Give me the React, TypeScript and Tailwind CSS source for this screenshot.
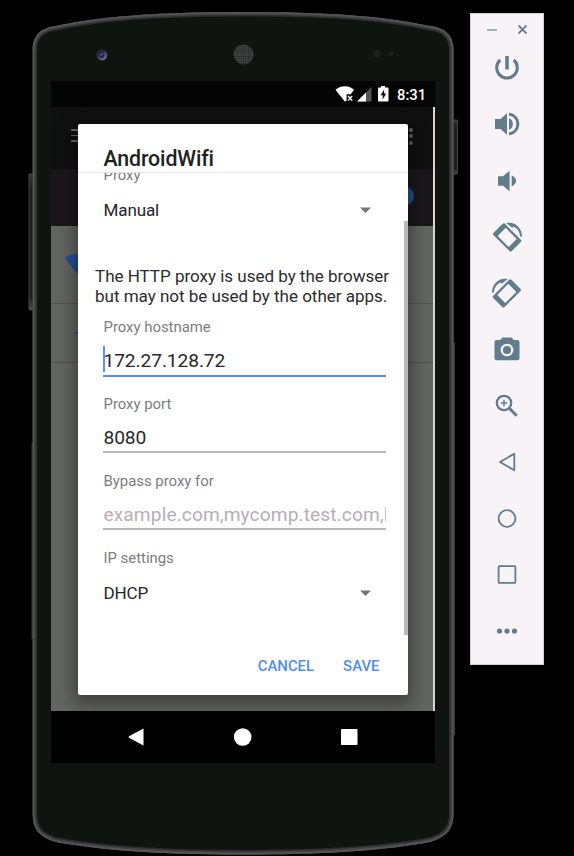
import React from 'react';

function PhoneShell() {
  const outline =
    'M32.7 50 C32.7 38 38 28 56 26 C100 17 150 12 243 12 C336 12 386 17 430 26 C448 28 453.500 38 453.500 50 V813 C453.500 829 447 837 430 842 C386 850 330 854.500 243 854.500 C156 854.500 100 850 56 842 C39 837 32.700 829 32.700 813 Z';
  return (
    <svg className="absolute left-0 top-0" width="470" height="856" viewBox="0 0 470 856">
      <defs>
        <linearGradient id="key" x1="0" x2="0" y1="0" y2="1">
          <stop offset="0" stopColor="#3a3a3c" />
          <stop offset="0.1" stopColor="#1f1f20" />
          <stop offset="0.9" stopColor="#1f1f20" />
          <stop offset="1" stopColor="#4a4a4c" />
        </linearGradient>
        <pattern id="mesh" width="2.4" height="2.4" patternUnits="userSpaceOnUse">
          <rect width="2.4" height="2.4" fill="#484848" />
          <circle cx="1.2" cy="1.2" r="0.85" fill="#1a1a1a" />
        </pattern>
        <clipPath id="body">
          <path d={outline} />
        </clipPath>
      </defs>
      <rect x="29" y="174" width="6" height="136" rx="1" fill="url(#key)" stroke="#515153" strokeWidth="0.8" />
      <rect x="31.5" y="443" width="3" height="196" fill="#3c3c3e" />
      <rect x="451" y="120" width="6.5" height="54" rx="1" fill="url(#key)" stroke="#515153" strokeWidth="0.8" />
      <rect x="452" y="343" width="2.8" height="392" fill="#4c4c4e" />
      <g clipPath="url(#body)">
        <path d={outline} fill="#101411" stroke="#2c2d2e" strokeWidth="9" />
        <path d={outline} fill="none" stroke="#434345" strokeWidth="6" />
        <path d={outline} fill="none" stroke="#555557" strokeWidth="3" />
      </g>
      <circle cx="102" cy="55" r="5.8" fill="#292a2b" />
      <circle cx="102.4" cy="56" r="4.3" fill="#6b6b70" />
      <circle cx="101.500" cy="54.800" r="3.400" fill="#23245e" />
      <path d="M100 55.500l3-2" stroke="#4d55d0" strokeWidth="1.500" />
      <circle cx="243.500" cy="54.500" r="10" fill="url(#mesh)" />
      <circle cx="377" cy="53.500" r="4" fill="#1f1c1c" />
      <circle cx="391" cy="53.500" r="2.500" fill="#1f1c1c" />
    </svg>
  );
}

function StatusBar() {
  return (
    <div className="flex h-[26px] shrink-0 items-center bg-[#050505] pr-[9px] text-white">
      <svg className="ml-auto" width="62" height="26" viewBox="0 0 62 26">
        <path d="M0.5 8.8C6 4.2 13.5 4.2 19 8.8L15.8 13.2H11.6V19.6L10 20.8Z" fill="#fff" />
        <path d="M13 15l4.2 4.6M17.2 15L13 19.6" stroke="#fff" strokeWidth="1.4" />
        <path d="M36.5 6V20.5H22Z" fill="#555" />
        <path d="M31 11.5V20.5H22Z" fill="#fff" />
        <path d="M46 5h4v1.600h2.500q1 0 1 1V19.600q0 1-1 1h-8.500q-1 0-1-1V7.600q0-1 1-1h2Z" fill="#fff" />
        <path d="M49.100 8.500l-3.600 5.700h2.200v4.300l3.500-5.900h-2.100Z" fill="#111" />
      </svg>
      <span className="mt-[1px] w-[29px] whitespace-nowrap text-[14.800px] font-medium leading-[26px]">8:31</span>
    </div>
  );
}

function DimmedSettings() {
  return (
    <div className="flex min-h-0 flex-1 border-r-2 border-[#d8d4d8]">
      <div className="flex flex-1 flex-col">
        <div className="flex h-[62px] items-center justify-between bg-[#101010] pl-[20px] pr-[20px]">
          <div className="mb-[5px] flex w-[18px] flex-col gap-[4px]">
            <div className="h-[1.500px] bg-[#666666]" />
            <div className="h-[1.500px] bg-[#666666]" />
            <div className="h-[1.500px] bg-[#666666]" />
          </div>
          <div className="mb-[4px] flex flex-col gap-[2.500px]">
            <div className="size-[4px] rounded-full bg-[#626262]" />
            <div className="size-[4px] rounded-full bg-[#626262]" />
            <div className="size-[4px] rounded-full bg-[#626262]" />
          </div>
        </div>
        <div className="flex h-[57px] items-center justify-end bg-[#1a171b] pr-[19px]">
          <div className="mb-1 size-[20px] rounded-full bg-[#234f87]" />
        </div>
        <div className="flex h-[78px] items-center border-b border-[#50534f] bg-[#636562] pl-[14px]">
          <svg width="30" height="24" viewBox="0 0 30 24">
            <path d="M0 5C9-1 21-1 30 5L15 24Z" fill="#234d9a" />
          </svg>
        </div>
        <div className="flex h-[59px] items-center border-b border-[#50534f] bg-[#636562] pl-[24px]">
          <div className="h-[2px] w-[12px] bg-[#234d9a]" />
        </div>
        <div className="flex-1 bg-[#636562]" />
      </div>
    </div>
  );
}

function Navigation() {
  return (
    <div className="flex h-[52px] shrink-0 items-center justify-center bg-black">
      <svg width="384" height="52" viewBox="0 0 384 52" fill="#fff">
        <path d="M92.500 17.500V34.500L78 26.800Q77 26 78 25.200Z" />
        <circle cx="191.700" cy="26" r="8.800" />
        <rect x="290" y="18" width="16.500" height="16" rx="0.800" />
      </svg>
    </div>
  );
}

function Label({ children }: { children: React.ReactNode }) {
  return (
    <div className="ml-[25.500px] h-5 whitespace-nowrap text-[14.930px] leading-[22px] tracking-[-0.02px] text-[#7d7d7d]">
      {children}
    </div>
  );
}

function Select({ value }: { value: string }) {
  return (
    <div className="ml-[25.500px] mr-[37px] flex h-[52px] items-center justify-between text-[17.070px] tracking-[-0.15px] text-[#252525]">
      <span className="mt-[2px]">{value}</span>
      <svg width="11" height="6" viewBox="0 0 11 6">
        <path d="M0 0.500H11L5.500 6Z" fill="#777" />
      </svg>
    </div>
  );
}

function Field({ label, value, active, hint }: { label: string; value: string; active?: boolean; hint?: boolean }) {
  return (
    <div className="h-[77px]">
      <Label>{label}</Label>
      <div
        className={
          'ml-[25px] mr-[22px] mt-[9px] flex overflow-hidden ' +
          (active ? 'h-[32px] border-b-2 border-[#4f8cf0]' : 'h-[31px] border-b-2 border-[#b9b9b9]')
        }
      >
        {active && <div className="-mr-[2px] mt-[1px] h-[26px] w-[2px] shrink-0 bg-[#5a92f0]" />}
        <span
          className={
            'whitespace-nowrap pl-[0.500px] text-[19.200px] leading-[31px] ' +
            (hint ? 'tracking-[0.080px] text-[#b8adb8]' : 'tracking-[-0.1px] text-[#272727]')
          }
        >
          {value}
        </span>
      </div>
    </div>
  );
}

function ProxyDialog() {
  return (
    <div className="absolute left-[27px] top-[43px] flex h-[571px] w-[330px] flex-col rounded-[2px] bg-white shadow-[0_6px_18px_4px_rgba(0,0,0,0.38)]">
      <div className="flex h-[49px] shrink-0 items-center border-b border-[#e4e4e4] pl-[25.500px] pt-[22px] text-[21.330px] font-medium tracking-[-0.13px] text-[#212121]">
        AndroidWifi
      </div>
      <div className="flex h-[462px] overflow-hidden">
        <div className="-mt-[9px] w-[330px] shrink-0">
          <Label>Proxy</Label>
          <Select value="Manual" />
          <div className="mb-[10px] ml-[17px] mt-[30px] whitespace-nowrap text-[17.070px] leading-[20px] tracking-[-0.04px] text-[#2c2c2c]">
            The HTTP proxy is used by the browser
            <br />
            but may not be used by the other apps.
          </div>
          <Field label="Proxy hostname" value="172.27.128.72" active />
          <Field label="Proxy port" value="8080" />
          <Field label="Bypass proxy for" value="example.com,mycomp.test.com,localhost" hint />
          <Label>IP settings</Label>
          <Select value="DHCP" />
        </div>
        <div className="-ml-[4px] mt-[48px] w-[4px] shrink-0 bg-[#bbb9bb]" />
      </div>
      <div className="flex h-[60px] items-center justify-end gap-[29px] pr-[28.500px] pt-[2px] text-[14.930px] font-medium text-[#4f8df5]">
        <span>CANCEL</span>
        <span>SAVE</span>
      </div>
    </div>
  );
}

function Glyph({ children, line }: { children: React.ReactNode; line?: boolean }) {
  return (
    <svg
      width="32"
      height="32"
      viewBox="-16 -16 32 32"
      fill={line ? 'none' : '#617d8c'}
      stroke={line ? '#617d8c' : 'none'}
      strokeWidth="1.8"
    >
      {children}
    </svg>
  );
}

function RotateShape() {
  return (
    <>
      <path
        transform="translate(0.2 0.4) rotate(45)"
        fillRule="evenodd"
        d="M-11.200 -8H11.200Q12.900 -8 12.900 -6.300V6.300Q12.900 8 11.200 8H-11.200Q-12.900 8 -12.900 6.300V-6.300Q-12.900 -8 -11.200 -8ZM-7.800 -5.700V5.700H7.800V-5.700Z"
      />
      <path d="M-0.800 -13.900C8 -15.700 14.900 -9 15.100 -0.500H13.200C12.700 -5.500 10 -9.100 6.500 -10.600L5.300 -9.200Z" />
    </>
  );
}

const tools: React.ReactNode[] = [
  <Glyph line>
    <path d="M0 -12V1.500" strokeWidth="3.600" />
    <path d="M-6.800 -8A10.300 10.300 0 1 0 6.800 -8" strokeWidth="3" />
  </Glyph>,
  <Glyph>
    <path d="M-12 -5H-6.500L0 -10.800V10.800L-6.500 5H-12Z" />
    <path d="M2 -5.800C7.200 -3.800 7.200 3.800 2 5.800Z" />
    <path d="M2 -10C13.800 -8 13.800 8 2 10" fill="none" stroke="#617d8c" strokeWidth="3" />
  </Glyph>,
  <Glyph>
    <path d="M-9 -4.800H-4L2.600 -10.200V10.200L-4 4.800H-9Z" />
    <path d="M4.700 -5.400C10.400 -3.500 10.400 3.500 4.700 5.400Z" />
  </Glyph>,
  <Glyph>
    <RotateShape />
  </Glyph>,
  <Glyph>
    <g transform="scale(-1 1)">
      <RotateShape />
    </g>
  </Glyph>,
  <Glyph>
    <g transform="translate(0 -1)">
      <path d="M-4.500 -11.400H4.500L6.800 -9H10.500Q12.500 -9 12.500 -7V9.200Q12.500 11.200 10.500 11.200H-10.500Q-12.500 11.200 -12.500 9.200V-7Q-12.500 -9 -10.500 -9H-6.800Z" />
      <circle cy="1" r="5.200" fill="none" stroke="#f7f3f7" strokeWidth="2.300" />
    </g>
  </Glyph>,
  <Glyph line>
    <circle cx="-3" cy="-3" r="7.200" strokeWidth="2.300" />
    <path d="M2.300 2.300L9.700 9.700" strokeWidth="3" />
    <path d="M-6.200 -3H0.200M-3 -6.200V0.200" strokeWidth="1.500" />
  </Glyph>,
  <Glyph line>
    <path d="M7.300 -8.300V8.300L-7 0Z" strokeLinejoin="round" />
  </Glyph>,
  <Glyph line>
    <circle cy="-0.500" r="8.400" />
  </Glyph>,
  <Glyph line>
    <rect x="-8.400" y="-8.900" width="16.800" height="16.800" rx="1" />
  </Glyph>,
  <Glyph>
    <circle cx="-7.500" r="2.600" />
    <circle r="2.600" />
    <circle cx="7.500" r="2.600" />
  </Glyph>,
];

function EmulatorToolbar() {
  return (
    <div className="mt-[13px] flex h-[651.500px] w-[74px] flex-col border border-[#d5d2d5] bg-[#f7f3f7] text-[#617d8c]">
      <div className="flex h-[26px] items-center justify-between pl-[15.500px] pr-[16px] pt-[5px]">
        <div className="h-[2px] w-[10px] bg-[#a3b1ba]" />
        <svg width="9" height="9" viewBox="0 0 9 9" stroke="#617d8c" strokeWidth="1.800">
          <path d="M0.500 0.500L8.500 8.500M8.500 0.500L0.500 8.500" />
        </svg>
      </div>
      {tools.map((icon, i) => (
        <div key={i} className="flex h-[56.300px] shrink-0 items-center justify-center pr-[1px]">
          {icon}
        </div>
      ))}
    </div>
  );
}

export default function App() {
  return (
    <div className="flex h-[856px] w-[574px] overflow-hidden bg-black font-[Roboto,'Liberation_Sans',sans-serif]">
      <div className="relative w-[470px] shrink-0 pl-[51px] pt-[81px]">
        <PhoneShell />
        <div className="relative flex h-[682px] w-[384px] flex-col overflow-hidden">
          <StatusBar />
          <DimmedSettings />
          <Navigation />
          <ProxyDialog />
        </div>
      </div>
      <EmulatorToolbar />
    </div>
  );
}
